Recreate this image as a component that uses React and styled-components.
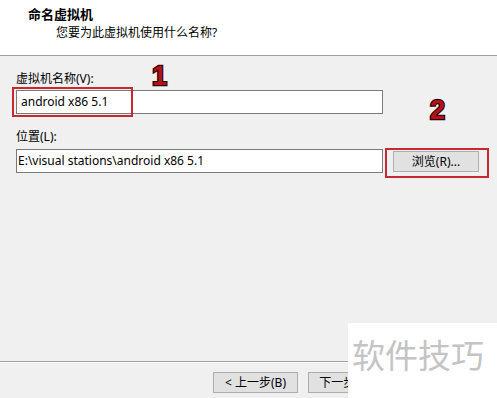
import React from "react";
import styled, { createGlobalStyle } from "styled-components";

const Global = createGlobalStyle`
  html, body { margin: 0; padding: 0; background: #f0f0f0; }
  body { font-family: "Noto Sans", "Noto Sans CJK SC", sans-serif; font-size: 12px; color: #000; }
`;

const Dialog = styled.div`
  position: relative;
  width: 497px;
  height: 398px;
  overflow: hidden;
  background: #f0f0f0;
  display: flex;
  flex-direction: column;
`;

const Header = styled.header`
  height: 56px;
  box-sizing: border-box;
  background: #ffffff;
  border-bottom: 1px solid #a0a0a0;
  padding: 6px 0 0 28px;
  flex: none;
`;

const Title = styled.div`
  font-size: 13px;
  font-weight: 700;
  line-height: 16px;
`;

const Subtitle = styled.div`
  font-size: 12px;
  line-height: 16px;
  margin: 3px 0 0 28px;
`;

const Body = styled.main`
  flex: 1;
  padding: 15px 16px 0 16px;
  display: flex;
  flex-direction: column;
`;

const Label = styled.label`
  display: block;
  font-size: 12px;
  line-height: 16px;
  margin-top: ${(p) => p.$top || 0}px;
`;

const Row = styled.div`
  display: flex;
  align-items: center;
  gap: 10px;
  margin-top: ${(p) => p.$top || 0}px;
`;

const Input = styled.div`
  width: 367px;
  height: 24px;
  box-sizing: border-box;
  border: 1px solid #7a7a7a;
  background: #ffffff;
  padding-left: ${(p) => p.$pad}px;
  font-size: 12px;
  line-height: 22px;
  white-space: nowrap;
  flex: none;
`;

const Button = styled.button`
  width: ${(p) => p.$w || 85}px;
  height: 21px;
  box-sizing: border-box;
  border: 1px solid #adadad;
  background: #e1e1e1;
  font-family: "Noto Sans", "Noto Sans CJK SC", sans-serif;
  font-size: 12px;
  line-height: 19px;
  padding: 0;
  color: #000;
  flex: none;
`;

const Footer = styled.footer`
  height: 37px;
  box-sizing: border-box;
  border-top: 1px solid #a0a0a0;
  box-shadow: inset 0 1px 0 #ffffff;
  padding: 10px 9px 0 0;
  display: flex;
  justify-content: flex-end;
  gap: 10px;
  flex: none;
`;

const Highlight = styled.div`
  position: absolute;
  left: ${(p) => p.$x}px;
  top: ${(p) => p.$y}px;
  width: ${(p) => p.$w}px;
  height: ${(p) => p.$h}px;
  box-sizing: border-box;
  border: 2px solid #c62a30;
  pointer-events: none;
`;

const Marker = styled.div`
  position: absolute;
  left: ${(p) => p.$x}px;
  top: ${(p) => p.$y}px;
  font-family: "Liberation Sans", Arial, sans-serif;
  font-weight: 700;
  font-size: 27px;
  line-height: 27px;
  color: #b3121b;
  -webkit-text-stroke: 2.4px #2a0000;
  paint-order: stroke fill;
`;

const Watermark = styled.div`
  position: absolute;
  left: 348px;
  top: 323px;
  right: 0;
  bottom: 0;
  background: #ffffff;
  padding: 13px 0 0 4px;
  font-family: "Noto Sans CJK SC", sans-serif;
  font-size: 33px;
  line-height: 36px;
  color: #c4c4c4;
  white-space: nowrap;
`;

export default function App() {
  return (
    <>
      <Global />
      <Dialog>
        <Header>
          <Title>命名虚拟机</Title>
          <Subtitle>您要为此虚拟机使用什么名称?</Subtitle>
        </Header>
        <Body>
          <Label>虚拟机名称(V):</Label>
          <Row $top={3}>
            <Input $pad={4}>android x86 5.1</Input>
          </Row>
          <Label $top={15}>位置(L):</Label>
          <Row $top={4}>
            <Input $pad={1}>E:\visual stations\android x86 5.1</Input>
            <Button $w={86}>浏览(R)...</Button>
          </Row>
        </Body>
        <Footer>
          <Button>&lt; 上一步(B)</Button>
          <Button>下一步(N) &gt;</Button>
          <Button>取消</Button>
        </Footer>
        <Highlight $x={12} $y={87} $w={121} $h={30} />
        <Highlight $x={385} $y={148} $w={104} $h={30} />
        <Marker $x={152} $y={63}>1</Marker>
        <Marker $x={430} $y={97}>2</Marker>
        <Watermark>软件技巧</Watermark>
      </Dialog>
    </>
  );
}
